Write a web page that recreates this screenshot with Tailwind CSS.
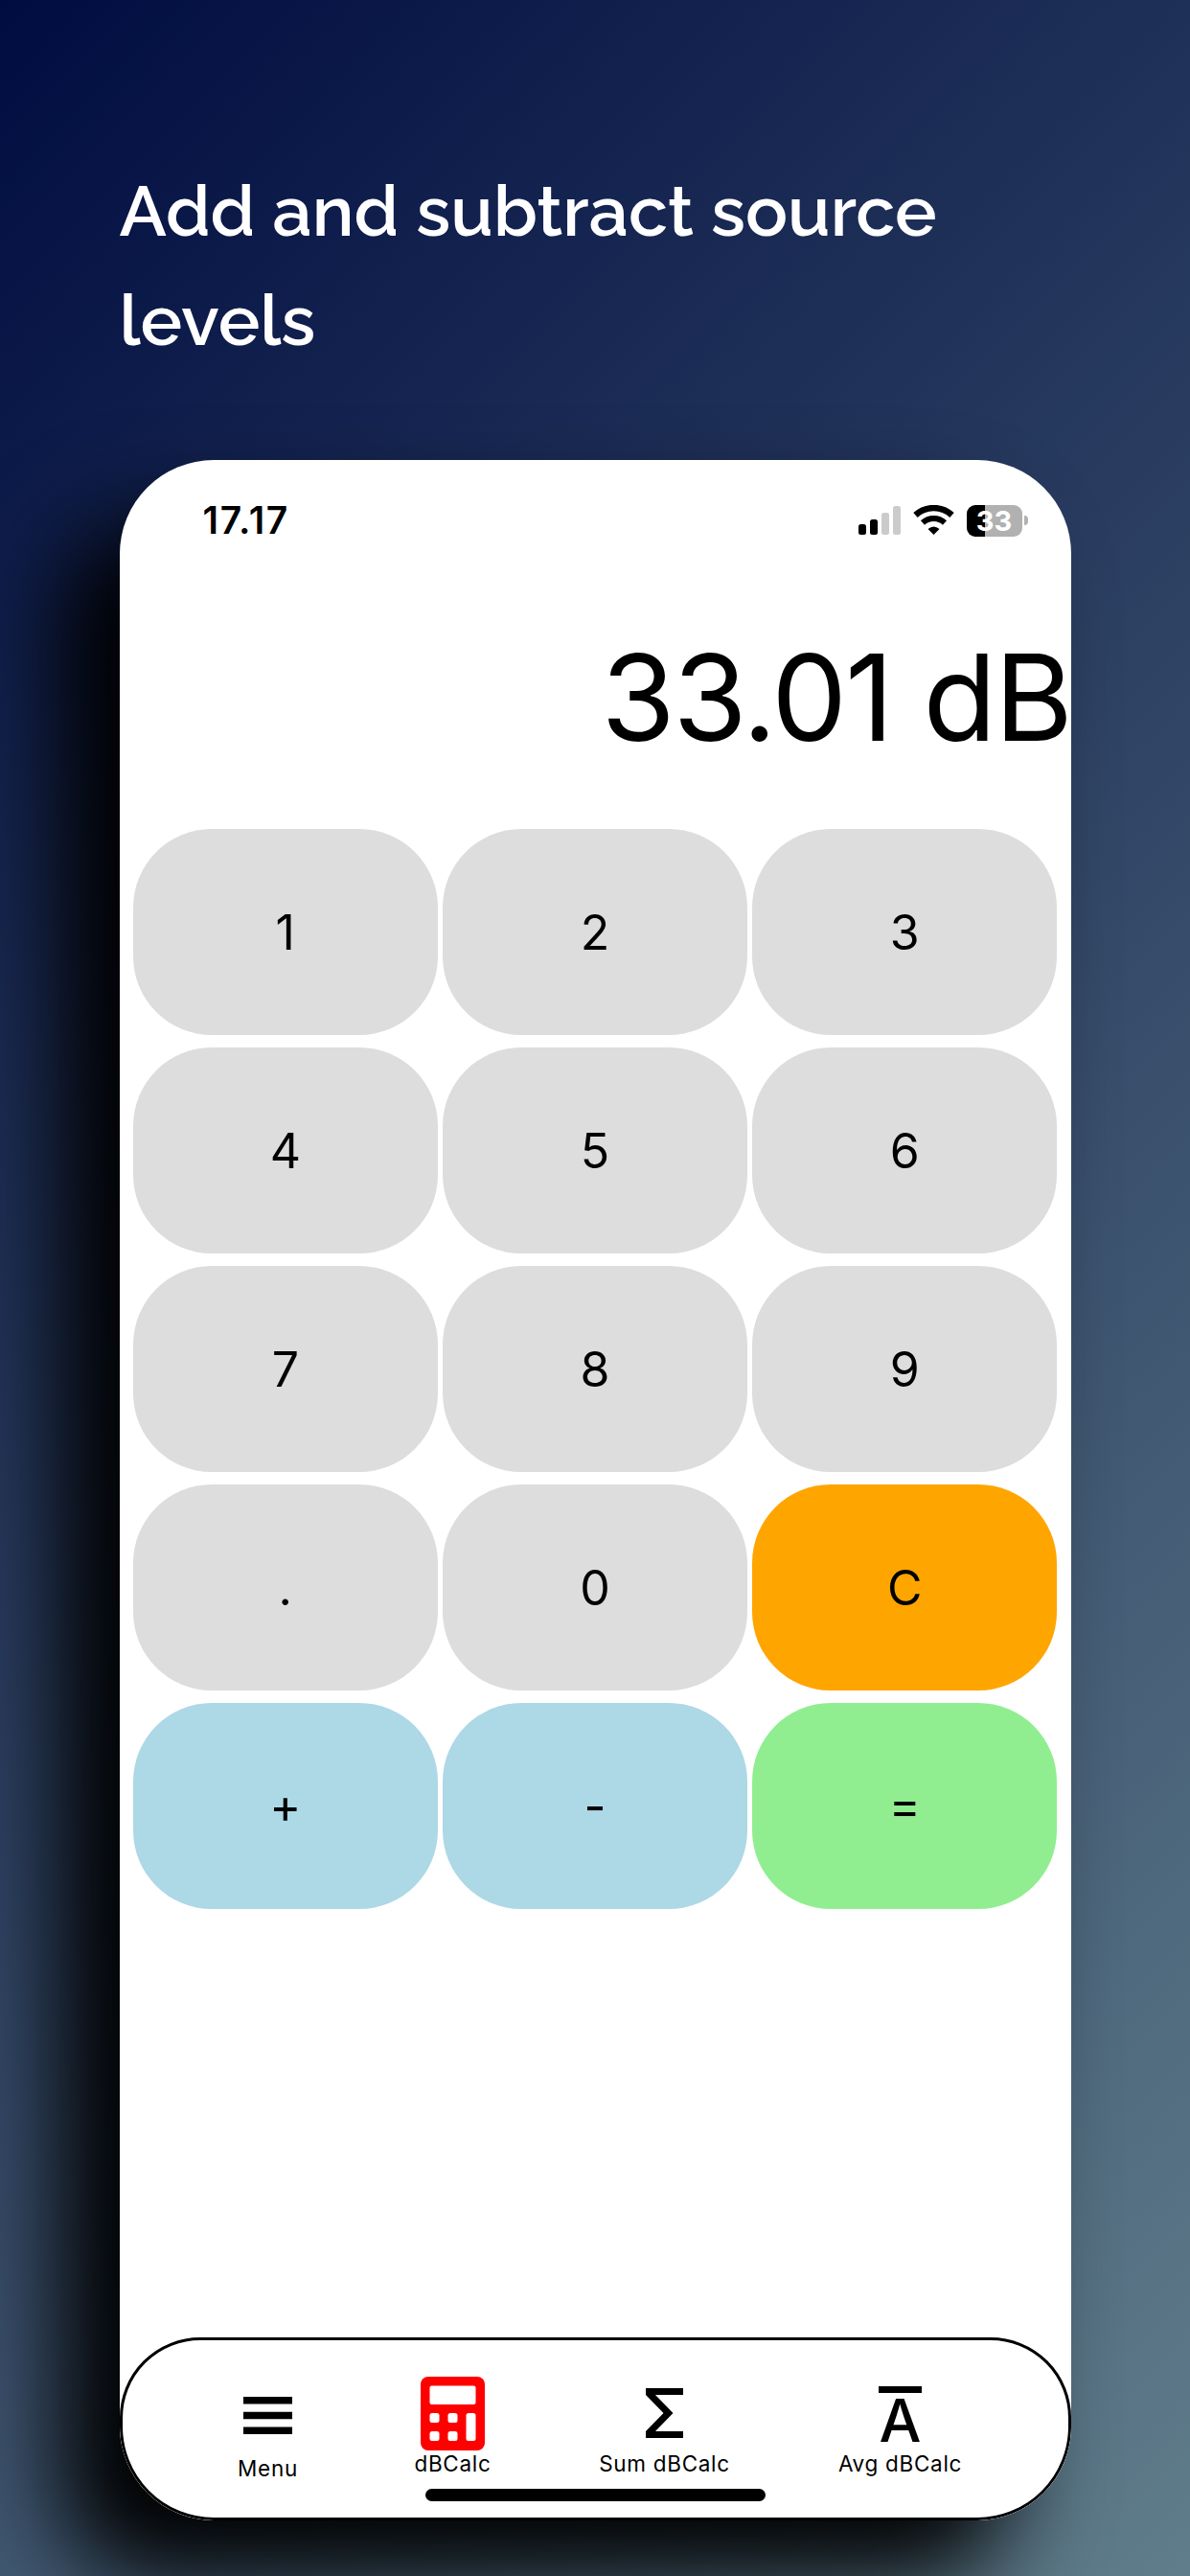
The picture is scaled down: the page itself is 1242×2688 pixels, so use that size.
<!DOCTYPE html>
<html lang="en">
<head>
  <meta charset="UTF-8" />
  <meta name="viewport" content="width=device-width, initial-scale=1" />
  <title>dBCalc</title>
  <script src="https://cdn.jsdelivr.net/npm/@tailwindcss/browser@4"></script>
</head>
<body class="w-[1242px] h-[2688px] overflow-hidden bg-[linear-gradient(135deg,#000c40,#607d8b)] font-[Inter,sans-serif] text-black">

<div class="flex flex-col h-full pl-[124.5px] pt-[163px]">
  <!-- Headline -->
  <h1 class="h-[317px] text-white text-[73.3px] font-semibold leading-[114px] font-[Raleway,Lato,sans-serif]">Add and subtract source<br>levels</h1>

  <!-- Phone -->
  <main class="flex flex-col w-[993px] h-[2150px] shrink-0 bg-white rounded-[98px] overflow-hidden shadow-[-64px_62px_100px_#000]">
    <!-- Status bar -->
    <div class="flex items-center h-[126px] pl-[87px] pr-[45px]">
      <span class="text-[39px] font-semibold tracking-[1.7px]">17.17</span>
      <svg class="ml-auto w-[44px] h-[32px]" viewBox="0 0 44 32">
        <rect x="0" y="20" width="8" height="11" rx="2.5" />
        <rect x="12" y="15" width="8" height="16" rx="2.5" />
        <rect x="24" y="8" width="8" height="23" rx="2.5" fill="#cbcbcb" />
        <rect x="36" y="1" width="8" height="30" rx="2.5" fill="#cbcbcb" />
      </svg>
      <svg class="ml-[13px] w-[43px] h-[32px]" viewBox="0 0 43 32" fill="none" stroke="#000">
        <path d="M2.5 10.5A28 28 0 0 1 40.5 10.5" stroke-width="6.5" />
        <path d="M10 18.5A17 17 0 0 1 33 18.5" stroke-width="6" />
        <path d="M21.5 31L15.5 25Q21.5 20 27.5 25Z" fill="#000" stroke="none" />
      </svg>
      <div class="ml-[13px] flex items-center gap-[2px]">
        <div class="flex items-center justify-center w-[58px] h-[33px] rounded-[9px] bg-[linear-gradient(90deg,#000_33%,#b1b1b1_33%)] text-white text-[29px] font-bold leading-none">33</div>
        <div class="w-[4px] h-[10px] rounded-r-full bg-[#b1b1b1]"></div>
      </div>
    </div>

    <!-- Result -->
    <div class="h-[259px] pt-[42px] text-right text-[125px] leading-[160px] tracking-[-2.2px] whitespace-nowrap">33.01 dB</div>

    <!-- Keypad -->
    <div class="grid grid-cols-3 auto-rows-[214.7px] gap-x-[5.3px] gap-y-[13.3px] w-[964.5px] ml-[14.3px] text-[50px]">
      <button class="pt-[2px] rounded-[82px] bg-[#ddd]">1</button>
      <button class="pt-[2px] rounded-[82px] bg-[#ddd]">2</button>
      <button class="pt-[2px] rounded-[82px] bg-[#ddd]">3</button>
      <button class="pt-[2px] rounded-[82px] bg-[#ddd]">4</button>
      <button class="pt-[2px] rounded-[82px] bg-[#ddd]">5</button>
      <button class="pt-[2px] rounded-[82px] bg-[#ddd]">6</button>
      <button class="pt-[2px] rounded-[82px] bg-[#ddd]">7</button>
      <button class="pt-[2px] rounded-[82px] bg-[#ddd]">8</button>
      <button class="pt-[2px] rounded-[82px] bg-[#ddd]">9</button>
      <button class="pt-[2px] rounded-[82px] bg-[#ddd]">.</button>
      <button class="pt-[2px] rounded-[82px] bg-[#ddd]">0</button>
      <button class="pt-[2px] rounded-[82px] bg-[orange]">C</button>
      <button class="rounded-[82px] bg-[lightblue]">+</button>
      <button class="pt-[2px] rounded-[82px] bg-[lightblue]">-</button>
      <button class="rounded-[82px] bg-[lightgreen]">=</button>
    </div>

    <!-- Tab bar -->
    <nav class="relative mt-auto h-[191px] border-[3px] border-black rounded-t-[84px] rounded-b-[98px] flex text-[22.5px] leading-[28px] tracking-[0.7px] whitespace-nowrap">
      <div class="ml-[92px] w-[120px] flex flex-col items-center">
        <svg class="mt-[59px] w-[51px] h-[39px]" viewBox="0 0 51 39"><path d="M0 0h51v7.5H0zM0 15.7h51v7.5H0zM0 31.4h51v7.5H0z" /></svg>
        <span class="mt-[22px]">Menu</span>
      </div>
      <div class="ml-[63px] w-[140px] flex flex-col items-center">
        <svg class="mt-[38px] w-[67px] h-[77px]" viewBox="0 0 67 77">
          <rect width="67" height="77" rx="8" fill="red" />
          <g fill="#fff">
            <rect x="9.5" y="9.5" width="48" height="19.5" rx="2" />
            <rect x="9.5" y="38" width="10" height="10" rx="2.5" />
            <rect x="28.5" y="38" width="10" height="10" rx="2.5" />
            <rect x="9.5" y="57" width="10" height="10" rx="2.5" />
            <rect x="28.5" y="57" width="10" height="10" rx="2.5" />
            <rect x="47.5" y="38" width="10" height="29" rx="2.5" />
          </g>
        </svg>
        <span>dBCalc</span>
      </div>
      <div class="ml-[71px] w-[160px] flex flex-col items-center">
        <svg class="mt-[50px] w-[39px] h-[52px]" viewBox="0 0 39 52"><path d="M0 0H39V7H10L28.5 26L10 45H39V52H0V45L18.5 26L0 7Z" /></svg>
        <span class="mt-[13px]">Sum dBCalc</span>
      </div>
      <div class="ml-[86px] w-[160px] flex flex-col items-center">
        <!-- Mean symbol: A with a bar over it -->
        <div class="mt-[48px] w-[45px] h-[58px] border-t-[7px] border-black text-[62px] leading-[57px] font-medium tracking-normal flex justify-center">A</div>
        <span class="mt-[9px]">Avg dBCalc</span>
      </div>
      <!-- Home indicator -->
      <div class="absolute left-[316px] bottom-[17px] w-[355px] h-[13px] rounded-full bg-black"></div>
    </nav>
  </main>
</div>

</body>
</html>
